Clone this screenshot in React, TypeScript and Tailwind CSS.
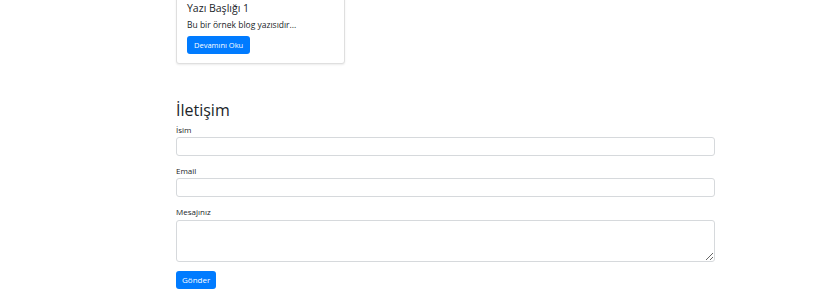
import React from 'react';

const font = { fontFamily: '"Open Sans", "Noto Sans", sans-serif' };

export default function App() {
    return (
        <div className="min-h-[301px] bg-white text-[#212529]" style={font}>
            <div className="ml-[176px] w-[539px]">
                <div className="-mt-[11px] w-[169px] rounded-[3px] border border-[#dfdfdf] bg-white px-[10px] pt-[10px] pb-[9px] shadow-[0_1px_2px_rgba(0,0,0,0.08)]">
                    <h5 className="mb-[3px] text-[10.5px] leading-[16px] font-medium">Yazı Başlığı 1</h5>
                    <p className="mb-[5px] text-[8.5px] leading-[12px]">Bu bir örnek blog yazısıdır...</p>
                    <button className="block h-[18px] rounded-[3px] bg-[#007bff] px-[7px] text-[7.5px] leading-[18px] text-white">
                        Devamını Oku
                    </button>
                </div>

                <section className="mt-[35px]">
                    <h2 className="text-[16px] leading-[22px] font-normal">İletişim</h2>
                    <form className="mt-[3px]">
                        <div className="mb-[9px]">
                            <label className="mb-[1px] block text-[8px] leading-[12px]">İsim</label>
                            <input type="text" className="block h-[19px] w-full rounded-[3px] border border-[#d6d9dc] bg-white" />
                        </div>
                        <div className="mb-[9px]">
                            <label className="mb-[1px] block text-[8px] leading-[12px]">Email</label>
                            <input type="email" className="block h-[19px] w-full rounded-[3px] border border-[#d6d9dc] bg-white" />
                        </div>
                        <div className="mb-[9px]">
                            <label className="mb-[2px] block text-[8px] leading-[12px]">Mesajınız</label>
                            <textarea className="block h-[42px] w-full rounded-[3px] border border-[#d6d9dc] bg-white" />
                        </div>
                        <button type="submit" className="block h-[18px] rounded-[3px] bg-[#007bff] px-[6px] text-[8px] leading-[18px] text-white">
                            Gönder
                        </button>
                    </form>
                </section>
            </div>
        </div>
    );
}
